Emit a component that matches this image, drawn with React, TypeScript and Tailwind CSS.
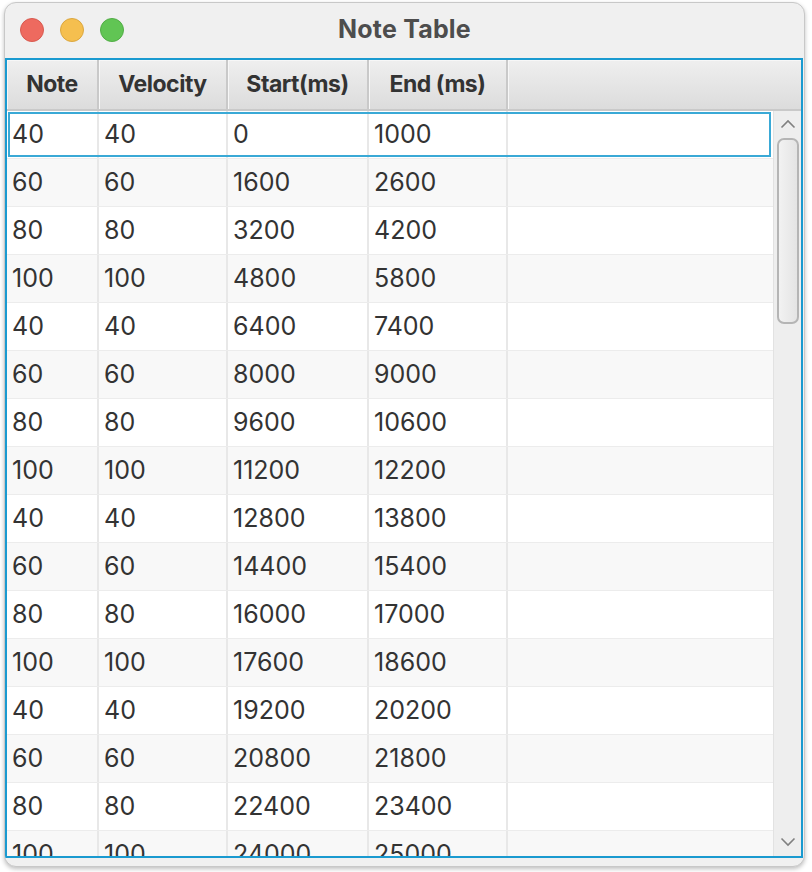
import React from "react";

const notes = [40, 60, 80, 100];

const rows = Array.from({ length: 16 }, (_, i) => {
    const start = i * 1600;
    return {
        note: notes[i % 4],
        velocity: notes[i % 4],
        start,
        end: start + 1000,
    };
});

const cols = [
    { label: "Note", w: "w-[92px]" },
    { label: "Velocity", w: "w-[129px]" },
    { label: "Start(ms)", w: "w-[141px]" },
    { label: "End (ms)", w: "w-[139px]" },
];

function Chevron({ up }: { up?: boolean }) {
    return (
        <svg width="16" height="10" viewBox="0 0 16 10" className="block">
            <path
                d={up ? "M1.5 8.5 L8 2 L14.5 8.5" : "M1.5 1.5 L8 8 L14.5 1.5"}
                fill="none"
                stroke="#808080"
                strokeWidth="1.6"
            />
        </svg>
    );
}

export default function App() {
    return (
        <div
            className="w-[812px] h-[872px] bg-white pt-[2px] pl-[4px]"
            style={{ fontFamily: "Inter, 'Liberation Sans', sans-serif" }}
        >
            <div className="w-[801px] h-[865px] rounded-[12px] border border-[#c8c8c8] bg-[#f0f0f0] shadow-[0_2px_4px_rgba(0,0,0,0.25)] overflow-hidden flex flex-col">
                {/* title bar */}
                <div className="relative h-[55px] shrink-0 flex items-center justify-center pb-[2px]">
                    <div className="absolute left-[15px] top-[15px] flex gap-[16px]">
                        <span className="w-[24px] h-[24px] rounded-full bg-[#ee6a5f] border border-[#d85a50]" />
                        <span className="w-[24px] h-[24px] rounded-full bg-[#f5bf4f] border border-[#dba73f]" />
                        <span className="w-[24px] h-[24px] rounded-full bg-[#61c554] border border-[#52ad46]" />
                    </div>
                    <span className="text-[25px] font-bold text-[#4d4d4d] tracking-[0.2px]">
                        Note Table
                    </span>
                </div>

                {/* table frame */}
                <div className="h-[800px] mr-[1px] border-2 border-[#1a9ad0] bg-white flex flex-col overflow-hidden">
                    {/* header */}
                    <div className="h-[51px] shrink-0 flex bg-gradient-to-b from-[#efefef] to-[#dcdcdc] border-b-2 border-[#c9c9c9]">
                        {cols.map((c) => (
                            <div
                                key={c.label}
                                className={`${c.w} shrink-0 flex items-center justify-center border-r-2 border-[#c9c9c9] shadow-[inset_1px_1px_0_#f7f7f7] text-[23px] font-bold text-[#333] tracking-[-0.5px]`}
                            >
                                {c.label}
                            </div>
                        ))}
                        <div className="flex-1 shadow-[inset_1px_1px_0_#f7f7f7]" />
                    </div>

                    {/* body */}
                    <div className="flex-1 flex overflow-hidden">
                        <div className="flex-1 flex flex-col">
                            {rows.map((r, i) => (
                                <div
                                    key={i}
                                    className={`relative h-[48px] shrink-0 flex border-b border-[#ececec] text-[25px] text-[#333] ${
                                        i % 2 === 0 ? "bg-white" : "bg-[#f8f8f8]"
                                    }`}
                                >
                                    {[r.note, r.velocity, r.start, r.end].map(
                                        (v, j) => (
                                            <div
                                                key={j}
                                                className={`${cols[j].w} shrink-0 flex items-center pl-[5px] border-r-2 border-[#e8e8e8]`}
                                            >
                                                {v}
                                            </div>
                                        )
                                    )}
                                    <div className="flex-1" />
                                    {i === 0 && (
                                        <span className="absolute left-[1px] right-[2px] top-[1px] bottom-[1px] border-2 border-[#3aa9d6]" />
                                    )}
                                </div>
                            ))}
                        </div>

                        {/* scrollbar */}
                        <div className="w-[28px] shrink-0 bg-[#eeeeee] border-l border-[#e2e2e2] flex flex-col items-center">
                            <div className="h-[24px] flex items-center justify-center pt-[2px]">
                                <Chevron up />
                            </div>
                            <div className="mt-[3px] w-[22px] h-[186px] rounded-[7px] border-2 border-[#b5b5b5] bg-gradient-to-r from-[#f2f2f2] to-[#e4e4e4]" />
                            <div className="flex-1" />
                            <div className="h-[24px] flex items-center justify-center pb-[4px]">
                                <Chevron />
                            </div>
                        </div>
                    </div>
                </div>
            </div>
        </div>
    );
}
